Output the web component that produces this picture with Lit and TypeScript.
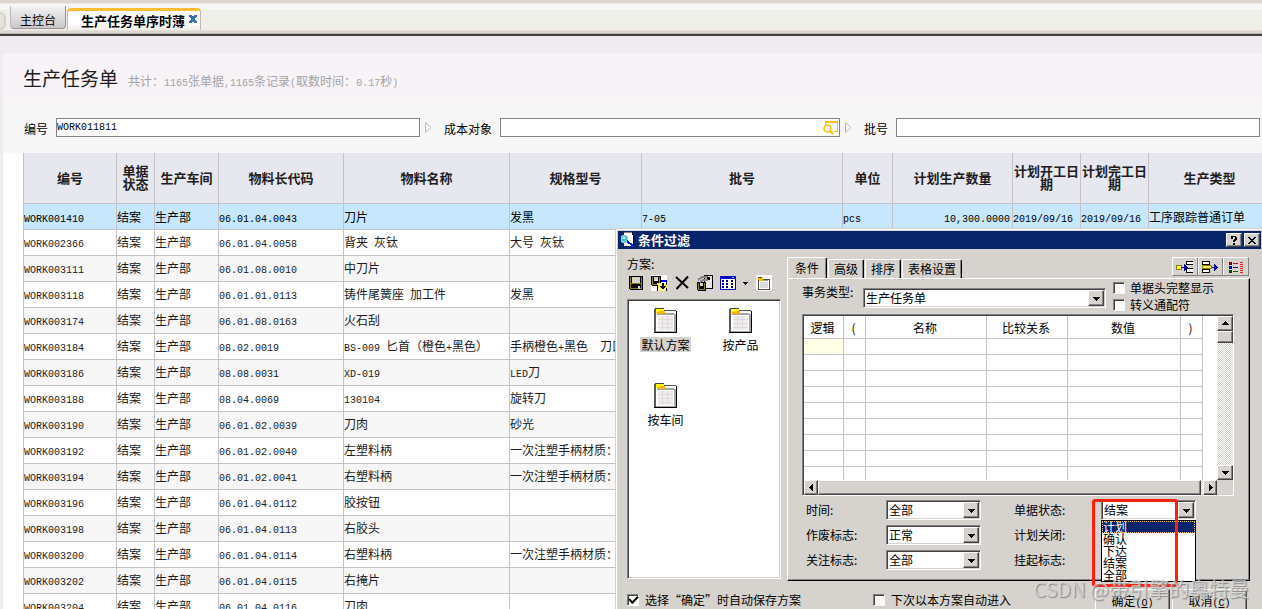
import { LitElement, html, svg, css } from 'lit';
import { customElement, property } from 'lit/decorators.js';

type Row = [string, string, string, string?, string?, string?, string?, string?, string?];

const COLUMNS: { label: string; width: number }[] = [
  { label: '编号', width: 93 },
  { label: '单据状态', width: 38 },
  { label: '生产车间', width: 64 },
  { label: '物料长代码', width: 125 },
  { label: '物料名称', width: 166 },
  { label: '规格型号', width: 132 },
  { label: '批号', width: 201 },
  { label: '单位', width: 50 },
  { label: '计划生产数量', width: 120 },
  { label: '计划开工日期', width: 68 },
  { label: '计划完工日期', width: 68 },
  { label: '生产类型', width: 122 },
];

const ROWS: Row[] = [
  ['WORK001410', '06.01.04.0043', '刀片', '发黑', '7-05', 'pcs', '10,300.0000', '2019/09/16', '工序跟踪普通订单'],
  ['WORK002366', '06.01.04.0058', '背夹 灰钛', '大号 灰钛'],
  ['WORK003111', '06.01.08.0010', '中刀片'],
  ['WORK003118', '06.01.01.0113', '铸件尾簧座 加工件', '发黑'],
  ['WORK003174', '06.01.08.0163', '火石刮'],
  ['WORK003184', '08.02.0019', 'BS-009 匕首（橙色+黑色）', '手柄橙色+黑色  刀口'],
  ['WORK003186', '08.08.0031', 'XD-019', 'LED刀'],
  ['WORK003188', '08.04.0069', '130104', '旋转刀'],
  ['WORK003190', '06.01.02.0039', '刀肉', '砂光'],
  ['WORK003192', '06.01.02.0040', '左塑料柄', '一次注塑手柄材质：'],
  ['WORK003194', '06.01.02.0041', '右塑料柄', '一次注塑手柄材质：'],
  ['WORK003196', '06.01.04.0112', '胶按钮'],
  ['WORK003198', '06.01.04.0113', '右胶头'],
  ['WORK003200', '06.01.04.0114', '右塑料柄', '一次注塑手柄材质：'],
  ['WORK003202', '06.01.04.0115', '右掩片'],
  ['WORK003204', '06.01.04.0116', '刀肉'],
];

/* Half-width runs are set in a monospaced face, half as wide as a Chinese character. */
const mixed = (text = '') =>
  text.split(/([\x20-\x7e]+)/).map((t) => (/^[\x20-\x7e]+$/.test(t) ? html`<span class="m">${t}</span>` : t));

const base = css`
  * { box-sizing: border-box; }
  button, input, select { font: inherit; color: inherit; margin: 0; padding: 0; border-radius: 0; }
  button { cursor: default; }
  .m { font-family: "Liberation Mono", monospace; font-size: 10px; line-height: 1; white-space: pre; }
  svg { display: block; flex: none; }
`;

const floppy = (x: number, y: number, s: number) => svg`<g transform="translate(${x} ${y}) scale(${s})">
  <path fill="#000" d="M0 0h14v14H1L0 13z"/><path fill="#848200" d="M1 1h1v11h10V1h1v12H1z"/>
  <path fill="#848200" d="M2 7h10v1H2z"/><path fill="#d6d3ce" d="M3 1h8v6H3z"/>
  <path fill="#d6d3ce" d="M9 10h2v3H9z"/></g>`;

const folderIcon = (w: number, h: number) => html`<svg width=${w} height=${h} viewBox="0 0 23 25" shape-rendering="crispEdges">
  <path fill="#5a595a" d="M0 1h2v23H0zM10 2h12v1H10z"/><path fill="#000" d="M22 3h1v22h-1zM0 24h23v1H0z"/>
  <path fill="#fff" d="M2 3h19v20H2z"/><path fill="#a5a2a5" d="M3 5h17v2H3zM20 6h2v18h-2zM2 23h20v1H2z"/>
  <path fill="#efebef" d="M4 8h15v14H4z"/>
  <path stroke="#dedbde" d="M4 11.500h15M4 15.500h15M4 19.500h15M8.500 8v14M13.500 8v14"/>
  <path fill="#ffff00" d="M2 1h8v4H2z"/><path fill="#f7b600" d="M5 3h6v3H3V4h2z"/><path fill="#424142" d="M1 0h9v1H1z"/></svg>`;

const tri = (dir: 'up' | 'down' | 'left' | 'right') => {
  const d = { down: 'M0 2h7v1H6v1H5v1H4v1H3V5H2V4H1V3H0z', up: 'M3 1h1v1h1v1h1v1h1v1H0V4h1V3h1V2h1z', left: 'M5 0v7H4V6H3V5H2V4H1V3h1V2h1V1h1V0z', right: 'M2 0h1v1h1v1h1v1h1v1H5v1H4v1H3v1H2z' }[dir];
  return html`<svg width="7" height="7" viewBox="0 0 7 7" shape-rendering="crispEdges"><path d=${d}/></svg>`;
};

@customElement('filter-dialog')
export class FilterDialog extends LitElement {
  static styles = [base, css`
    :host { display: block; background: #d6d3ce; border: 1px solid #d6d3ce; border-width: 1px 0 0 1px; box-shadow: inset 1px 1px #fff; padding: 2px 1px 0 2px; font-size: 12px; line-height: 16px; color: #000; overflow: hidden; }
    .title { display: flex; align-items: center; height: 18px; padding: 0 1px 0 2px; background: #08246b; color: #fff; font-weight: 700; gap: 2px; }
    .title h2 { flex: 1; margin: 0; font-size: 13px; line-height: 18px; }
    .raised { display: grid; place-items: center; background: #d6d3ce; border: 1px solid; border-color: #fff #424142 #424142 #fff; box-shadow: inset -1px -1px #848284; }
    .title .raised { width: 16px; height: 14px; color: #000; }
    .sunk { border: 1px solid; border-color: #848284 #fff #fff #848284; background: #fff; }
    .body { display: grid; grid-template-columns: 154px minmax(0, 1fr); gap: 6px; padding: 0 11px 0 9px; height: 332px; }
    .left { display: flex; flex-direction: column; padding: 7px 0 2px; }
    .toolbar { display: flex; align-items: center; gap: 7px; height: 16px; margin: 3px 0 8px; }
    .toolbar button { border: 0; background: none; height: 16px; }
    .toolbar button:first-child, .toolbar .drop { margin-right: 1px; }
    .plans { flex: 1; display: grid; grid-template-columns: 75px 75px; grid-auto-rows: 75px; padding-top: 8px; box-shadow: inset 1px 1px #424142, inset -1px -1px #d6d3ce; overflow: hidden; }
    .plan { display: flex; flex-direction: column; align-items: center; gap: 4px; border: 0; background: none; line-height: 15px; }
    .plan span { padding: 0 1px; }
    .plan.on span { background: #d6d3ce; }
    .right { display: flex; flex-direction: column; min-width: 0; padding-top: 8px; }
    .tabs { display: flex; align-items: flex-end; gap: 1px; height: 21px; padding-right: 1px; }
    .tab { border: 1px solid; border-color: #fff #000 transparent #fff; border-bottom: 0; border-radius: 2px 2px 0 0; background: #d6d3ce; height: 19px; padding: 0 5px; box-shadow: inset -1px 0 #848284; line-height: 18px; }
    .tab.on { height: 21px; padding: 0 7px; line-height: 20px; }
    .tools { display: flex; align-self: flex-start; margin-left: auto; height: 19px; border: 1px solid; border-color: #fff #848284 #848284 #fff; }
    .tools button { display: grid; place-items: center; width: 25px; border: 0; border-right: 1px solid #848284; background: none; box-shadow: 1px 0 #fff; overflow: hidden; }
    .tools button:last-child { border-right: 0; box-shadow: none; }
    .panel { flex: 1; border: 1px solid; border-color: #fff #000 #000 #fff; box-shadow: inset -1px -1px #848284; padding: 0 14px; }
    .kind { display: grid; grid-template-columns: 61px minmax(0, 243px) minmax(0, 1fr); height: 35px; }
    .kind > label { padding-top: 5px; }
    .kind .combo { margin-top: 9px; }
    .checks { padding-left: 7px; }
    .check { display: flex; align-items: center; gap: 5px; height: 17px; white-space: nowrap; }
    .check input { appearance: none; flex: none; width: 12px; height: 12px; border: 1px solid; border-color: #848284 #fff #fff #848284; box-shadow: inset 1px 1px #424142; background: #fff; display: grid; place-items: center; }
    .check input:checked::after { content: ""; width: 7px; height: 4px; border: solid #000; border-width: 0 0 2px 2px; transform: rotate(-45deg) translate(1px, -1px); }
    .combo { display: grid; grid-template-columns: minmax(0, 1fr) 18px; height: 20px; position: relative; }
    .combo select { grid-area: 1 / 1 / 2 / 3; appearance: none; border: 1px solid; border-color: #848284 #fff #fff #848284; box-shadow: inset 1px 1px #424142, inset -1px -1px #d6d3ce; background: #fff; padding-left: 2px; line-height: 16px; outline: none; }
    .combo .raised { grid-area: 1 / 2; margin: 2px 2px 2px 0; pointer-events: none; }
    .grid { display: grid; grid-template: 164px 15px / minmax(0, 1fr) 16px; box-shadow: inset 1px 1px #424142; padding: 1px 0 0 1px; margin-right: 1px; }
    .cells { overflow: hidden; }
    table { table-layout: fixed; border-collapse: separate; border-spacing: 0; width: 0; }
    th, td { border-right: 1px solid #c6c3c6; border-bottom: 1px solid #c6c3c6; padding: 0; height: 16px; font-weight: 400; line-height: 15px; }
    th { height: 23px; padding-right: 2px; }
    .here { background: #ffffe7; }
    .bar { display: flex; background: repeating-conic-gradient(#fff 0 25%, #d6d3ce 0 50%) 0 0 / 2px 2px; }
    .bar.v { flex-direction: column; }
    .bar.v .raised { height: 15px; }
    .bar.v .thumb { height: 12px; margin-bottom: auto; }
    .bar.h .raised { width: 14px; }
    .bar.h .thumb { flex: 1; width: auto; margin-right: 2px; }
    .corner { background: #d6d3ce; }
    .fields { display: grid; grid-template-columns: 80px 95px 33px 87px 95px; grid-auto-rows: 25px; padding: 4px 0 0 4px; }
    .fields label, .fields .name { line-height: 20px; }
    .fields .second { grid-column: 4; }
    .list { position: absolute; z-index: 1; top: 20px; left: 0; width: 95px; margin: 0; padding: 0; list-style: none; border: 1px solid #000; background: #fff; }
    .list li { height: 12px; line-height: 12px; padding-left: 1px; }
    .list .on { background: #08246b; color: #fff; outline: 1px dotted #f7cb6b; outline-offset: -1px; }
    .mark { position: absolute; z-index: 2; left: -9px; top: -1px; width: 86px; height: 88px; border: 3px solid #ff2010; border-radius: 3px; pointer-events: none; }
    .foot { display: flex; align-items: center; height: 22px; margin-top: 8px; padding: 0 14px 0 9px; }
    .foot .check { gap: 6px; }
    .foot .check:first-child { flex: none; width: 246px; }
    .foot .ok { margin-left: auto; margin-right: 2px; }
    .foot .raised { flex: none; width: 75px; height: 22px; display: block; line-height: 19px; }
  `];

  private combo(id: string, value: string, extra: unknown = '') {
    return html`<div class="combo"><select id=${id}><option>${value}</option></select><span class="raised">${tri('down')}</span>${extra}</div>`;
  }

  private check(text: unknown, checked = false) {
    return html`<label class="check"><input type="checkbox" .checked=${checked}>${text}</label>`;
  }

  render() {
    const heads: [string, number][] = [['逻辑', 40], ['(', 22], ['名称', 121], ['比较关系', 81], ['数值', 113], [')', 22]];
    const states = ['计划', '确认', '下达', '结案', '全部'];
    return html`
      <div class="title">
        <svg width="16" height="16" viewBox="0 0 16 16" shape-rendering="crispEdges"><path fill="#fff" d="M4 0h8l2 3v11H4z"/><path fill="#848284" d="M4 0h8v1H4z"/><path fill="#000" d="M12 0h1v2h1v12h-1V3h-1z"/><circle cx="4.500" cy="7" r="3.500" fill="#31cfce" stroke="#a5cbf7"/><path fill="#fff" d="M3 5h2v2H3z"/><path stroke="#0030c6" stroke-width="2" d="M7 9l6 5"/></svg>
        <h2>条件过滤</h2>
        <button class="raised" aria-label="帮助"><svg width="8" height="9" viewBox="0 0 8 9" shape-rendering="crispEdges"><path d="M1 0h5v1h1v3H6v1H5v1H3V4h1V3h1V1H3v2H1zM3 7h2v2H3z"/></svg></button>
        <button class="raised" aria-label="关闭"><svg width="8" height="7" viewBox="0 0 8 7" shape-rendering="crispEdges"><path d="M0 0h2v1h1v1h2V1h1V0h2v1H7v1H6v1H5v1h1v1h1v1h1v1H6V6H5V5H3v1H2v1H0V6h1V5h1V4h1V3H2V2H1V1H0z"/></svg></button>
      </div>
      <div class="body">
        <div class="left">
          <div>方案:</div>
          <div class="toolbar">
            <button aria-label="保存"><svg width="16" height="16" shape-rendering="crispEdges">${floppy(2, 1, 1)}</svg></button>
            <button aria-label="另存"><svg width="16" height="16" shape-rendering="crispEdges"><path fill="#fff" d="M0 0h16v16H0z"/><path d="M0 1h10v10H1L0 10z"/><path fill="#848200" d="M1 2h1v7h6V2h1v8H1z"/><path fill="#d6d3ce" d="M3 2h4v4H3zM6 8h1v2H6z"/><path fill="#0000ff" d="M10 5h6v2h-6z"/><path fill="#fff384" d="M7 8h9v8H7z"/><path fill="none" stroke="#000" d="M6.500 11v4.500M15.500 7v3M15.500 13v3"/><path d="M11 8h2v3h2v1h-1v1h-1v1h-2v-1h-1v-1H9v-1h2z"/></svg></button>
            <button aria-label="删除"><svg width="16" height="16"><path stroke="#000" stroke-width="2" d="M2 2l12 11M14 1.500L2.500 14"/></svg></button>
            <button aria-label="导入"><svg width="16" height="16" shape-rendering="crispEdges"><path fill="#e7e3e7" stroke="#000" d="M7.500.500h8v13h-8z"/><path d="M0 7h9v9H1l-1-1z"/><path fill="#848200" d="M1 8h1v6h5V8h1v7H1z"/><path fill="#d6d3ce" d="M3 8h3v3H3z"/><path fill="none" stroke="#848284" stroke-width="2" d="M1 5l4-3h5v3H6L3 7"/><path d="M10 2h3v3h-2z"/></svg></button>
            <button aria-label="视图"><svg width="16" height="16" shape-rendering="crispEdges"><path fill="#0000c6" d="M0 1h16v14H0z"/><path fill="#fff" d="M1 4h14v10H1z"/><path fill="#00ffff" d="M12 2h2v1h-2z"/><path stroke="#000084" stroke-width="2" stroke-dasharray="2 1" d="M2 6h3M6 6h3M11 6h3M2 9h3M6 9h3M11 9h3M2 12h3M6 12h3M11 12h3"/></svg></button>
            <button class="drop" aria-label="更多"><svg width="5" height="16" shape-rendering="crispEdges"><path d="M0 7h5v1H4v1H3v1H2V9H1V8H0z"/></svg></button>
            <button aria-label="新建"><svg width="16" height="16" shape-rendering="crispEdges"><path fill="#fff" d="M0 0h16v16H0z"/><path fill="#fff" stroke="#525152" d="M2.500 4.500h11v10h-11z"/><path fill="#dedbde" d="M4 7h8v6H4z"/><path fill="#a5a2a5" d="M4 5h8v1H4z"/><path fill="#f7c300" d="M2 3h5v3H3V5H2z"/><path fill="#424142" d="M2 2h4v1H2z"/></svg></button>
          </div>
          <div class="plans sunk">
            ${['默认方案', '按产品', '按车间'].map((p, i) => html`<button class="plan ${i === 0 ? 'on' : ''}">${folderIcon(23, 25)}<span>${p}</span></button>`)}
          </div>
        </div>
        <div class="right">
          <div class="tabs" role="tablist">
            ${['条件', '高级', '排序', '表格设置'].map((t, i) => html`<button role="tab" aria-selected=${i === 0} class="tab ${i === 0 ? 'on' : ''}">${t}</button>`)}
            <div class="tools">
              <button aria-label="插入行"><svg width="18" height="14" shape-rendering="crispEdges"><path fill="#fff" stroke="#000" d="M17 1.500h-6.500v3H17M17 8.500h-6.500v4H17"/><path fill="#fff35a" stroke="#848200" d="M.500 5.500h5v4h-5z"/><path fill="#0000a5" d="M5 7h3V4l4 3.500L8 11V8H5z"/></svg></button>
              <button aria-label="删除行"><svg width="18" height="14" shape-rendering="crispEdges"><path fill="#fff" stroke="#000" d="M1.500 1.500h7v3h-7zM1.500 9.500h7v3h-7z"/><path fill="#fff35a" stroke="#848200" d="M1.500 5.500h9v3h-9z"/><path fill="#0000a5" d="M11 7h2V4l4 3.500-4 3.500V8h-2z"/></svg></button>
              <button aria-label="清空"><svg width="16" height="14" shape-rendering="crispEdges"><path fill="#c61010" stroke="#630000" d="M1.500 2.500h2v2h-2z"/><path fill="#0061ff" stroke="#000084" d="M1.500 6.500h2v2h-2z"/><path fill="#008200" stroke="#004100" d="M1.500 10.500h2v2h-2z"/><path stroke="#c61010" d="M5 3.500h5"/><path stroke="#000084" d="M5 7.500h5"/><path stroke="#006100" d="M5 11.500h5"/><path stroke="#d62020" stroke-width="3" stroke-dasharray="1 1" d="M13.500 2v11"/></svg></button>
            </div>
          </div>
          <div class="panel">
            <div class="kind">
              <label for="kind">事务类型:</label>
              ${this.combo('kind', '生产任务单')}
              <div class="checks">${this.check('单据头完整显示')}${this.check('转义通配符')}</div>
            </div>
            <div class="grid sunk">
              <div class="cells"><table>
                <colgroup>${heads.map(([, w]) => html`<col width=${w}>`)}</colgroup>
                <thead><tr>${heads.map(([h]) => html`<th>${h}</th>`)}</tr></thead>
                <tbody>${Array.from({ length: 9 }, (_, r) => html`<tr>${heads.map((_h, c) => html`<td class=${r === 0 && c === 0 ? 'here' : ''}></td>`)}</tr>`)}</tbody>
              </table></div>
              <div class="bar v"><span class="raised">${tri('up')}</span><span class="raised thumb"></span><span class="raised">${tri('down')}</span></div>
              <div class="bar h"><span class="raised">${tri('left')}</span><span class="raised thumb"></span><span class="raised">${tri('right')}</span></div>
              <div class="corner"></div>
            </div>
            <div class="fields">
              <label for="time">时间:</label>${this.combo('time', '全部')}
              <label class="second" for="state">单据状态:</label>
              ${this.combo('state', '结案', html`
                <ul class="list" role="listbox">${states.map((s, i) => html`<li role="option" aria-selected=${i === 0} class=${i === 0 ? 'on' : ''}>${s}</li>`)}</ul>
                <div class="mark"></div>`)}
              <label for="void">作废标志:</label>${this.combo('void', '正常')}
              <span class="name second">计划关闭:</span><span></span>
              <label for="follow">关注标志:</label>${this.combo('follow', '全部')}
              <span class="name second">挂起标志:</span><span></span>
            </div>
          </div>
        </div>
      </div>
      <div class="foot">
        ${this.check('选择“确定”时自动保存方案', true)}
        ${this.check('下次以本方案自动进入')}
        <button class="raised ok">确定<span class="m">(<u>O</u>)</span></button>
        <button class="raised">取消<span class="m">(<u>C</u>)</span></button>
      </div>`;
  }
}

@customElement('search-field')
export class SearchField extends LitElement {
  @property() label = '';
  @property() value = '';
  @property({ type: Boolean }) lookup = false;
  @property({ type: Boolean }) next = false;

  static styles = [base, css`
    :host { display: flex; align-items: center; min-width: 0; }
    label { flex: none; line-height: 20px; padding-top: 2px; margin-right: 8px; }
    .box { flex: 1; min-width: 0; display: flex; align-items: center; height: 19px; border: 1px solid #848284; background: #fff; box-shadow: 0 1px #fff; }
    input { flex: 1; min-width: 0; height: 17px; border: 0; outline: 0; background: none; font-family: "Liberation Mono", monospace; font-size: 10px; }
    button { border: 0; background: none; margin-right: 1px; }
    .next { margin: 0 12px 0 5px; }
  `];

  render() {
    return html`<label for="f">${this.label}</label>
      <span class="box"><input id="f" .value=${this.value}>
        ${this.lookup ? html`<button aria-label="查找"><svg width="15" height="14" viewBox="0 0 15 14" fill="none" stroke="#ffbe00" shape-rendering="crispEdges"><path stroke-width="2" d="M2 1h13"/><path d="M2.500 0v5M14.500 0v10.500H11"/><circle cx="4.500" cy="7.500" r="3.500" shape-rendering="auto" stroke-width="1.500"/><path shape-rendering="auto" stroke-width="2" d="M7 10l3 3"/></svg></button>` : ''}
      </span>
      ${this.next ? html`<svg class="next" width="7" height="12" viewBox="0 0 7 12" fill="none" stroke="#bdbabd"><path d="M.500.500v10l5.500-5z"/></svg>` : ''}`;
  }
}

@customElement('app-root')
export class AppRoot extends LitElement {
  static styles = [base, css`
    :host { display: flex; flex-direction: column; position: relative; height: 100vh; overflow: hidden; background: #efebef; color: #211c21; font: 12px/16px "Noto Sans CJK SC", "Liberation Sans", sans-serif; }
    .strip { display: flex; align-items: flex-end; flex: none; height: 36px; padding-bottom: 6px; background: linear-gradient(#ddd7d0 0 3px, #f0e8e8 3px 4px, #f8f7f7 4px 9px, #efefe9 10px 29px, #eeeae4 30px, #dcd6ce 31px 33px, #9c9894 34px, #424142 34px); gap: 1px; }
    .knob { width: 6px; height: 18px; border: 2px solid #d6cfc6; border-left: 0; border-radius: 0 9px 9px 0; background: #e7e3de; margin-right: 3px; }
    .tab { display: flex; justify-content: center; align-items: center; height: 23px; padding: 5px 9px 0 9px; background: linear-gradient(#f4f3f2, #c9c7c9); border: 1px solid #949294; border-top: 0; border-left-color: #bdbabd; border-radius: 0 0 4px 4px; color: #000; margin-bottom: 1px; line-height: 16px; }
    .tab.on { gap: 4px; height: 22px; margin-bottom: 0; padding: 0 3px 0 13px; background: linear-gradient(#fff 60%, #f0eeea); border: 1px solid #bdbabd; border-bottom: 0; border-top: 3px solid #ffbe31; border-radius: 4px 4px 0 0; font-size: 13px; font-weight: 700; }
    .tab.on svg { margin-bottom: 4px; }
    .page { flex: 1; min-height: 0; margin: 17px 0 0 3px; background: #fff; }
    header { display: flex; align-items: center; gap: 10px; height: 49px; padding: 1px 20px 0; background: #f7f3f7; }
    h1 { margin: 0; font-size: 19px; line-height: 24px; font-weight: 400; }
    .count { color: #a5a2a5; margin-top: 6px; }
    form { display: flex; height: 51px; padding: 1px 2px 0 21px; background: #f7f7f7; color: #000; }
    search-field { height: 49px; }
    .f1, .f2 { flex: 1 1 420px; }
    .f3 { flex: 1 1 396px; }
    .wrap { padding-left: 20px; overflow: hidden; }
    table { table-layout: fixed; width: 100%; border-collapse: separate; border-spacing: 0; border-left: 1px solid #c6c3c6; }
    th, td { border-right: 1px solid #c6c3c6; border-bottom: 1px solid #c6c3c6; padding: 0 0 2px; height: 26px; text-align: left; white-space: pre; overflow: hidden; }
    th { height: 51px; background: #e7e7ef; font-size: 13px; line-height: 13px; text-align: center; white-space: normal; }
    td.num { text-align: right; padding-right: 2px; }
    tr:nth-child(odd) td { background: #f7f7f7; }
    tr.sel:first-child td { background: #c6e7ff; color: #000; padding-bottom: 0; }
    filter-dialog { position: absolute; left: 615px; top: 228px; right: 0; bottom: 0; }
    .water { position: absolute; z-index: 3; right: 13px; bottom: 6px; font-size: 20px; line-height: 28px; color: rgba(225, 225, 225, 0.7); text-shadow: 1px 1px 1px #888; pointer-events: none; white-space: nowrap; }
  `];

  render() {
    return html`
      <nav class="strip">
        <span class="knob"></span>
        <button class="tab">主控台</button>
        <button class="tab on">生产任务单序时薄<svg width="8" height="8" viewBox="0 0 8 8" shape-rendering="crispEdges"><path fill="#3971ad" d="M0 0h3v1h2V0h3v2H7v1H6v2h1v1h1v2H5V7H3v1H0V6h1V5h1V3H1V2H0z"/></svg></button>
      </nav>
      <main class="page">
        <header><h1>生产任务单</h1><span class="count">${mixed('共计：1165张单据,1165条记录(取数时间：0.17秒)')}</span></header>
        <form>
          <search-field class="f1" label="编号" value="WORK011811" next></search-field>
          <search-field class="f2" label="成本对象" lookup next></search-field>
          <search-field class="f3" label="批号"></search-field>
        </form>
        <div class="wrap"><table>
          <colgroup>${COLUMNS.map((c) => html`<col width=${c.width}>`)}</colgroup>
          <thead><tr>${COLUMNS.map((c) => html`<th>${c.label}</th>`)}</tr></thead>
          <tbody>${ROWS.map((r, i) => html`<tr class=${i === 0 ? 'sel' : ''}>
            <td>${mixed(r[0])}</td><td>结案</td><td>生产部</td><td>${mixed(r[1])}</td><td>${mixed(r[2])}</td><td>${mixed(r[3])}</td>
            <td>${mixed(r[4])}</td><td>${mixed(r[5])}</td><td class="num">${mixed(r[6])}</td><td>${mixed(r[7])}</td><td>${mixed(r[7])}</td><td>${mixed(r[8])}</td></tr>`)}</tbody>
        </table></div>
      </main>
      <filter-dialog></filter-dialog>
      <div class="water">CSDN @带引擎的奥特曼</div>`;
  }
}
